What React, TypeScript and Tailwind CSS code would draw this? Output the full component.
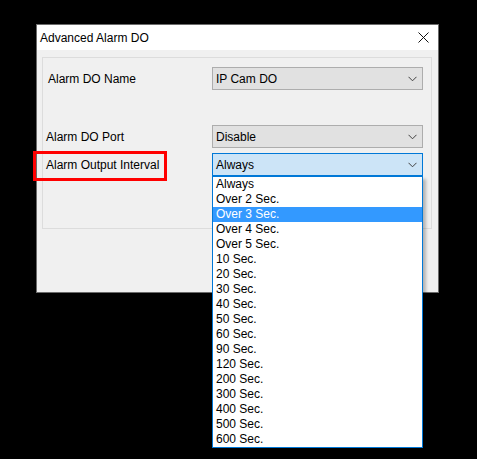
import React from "react";

const intervals = [
  "Always",
  "Over 2 Sec.",
  "Over 3 Sec.",
  "Over 4 Sec.",
  "Over 5 Sec.",
  "10 Sec.",
  "20 Sec.",
  "30 Sec.",
  "40 Sec.",
  "50 Sec.",
  "60 Sec.",
  "90 Sec.",
  "120 Sec.",
  "200 Sec.",
  "300 Sec.",
  "400 Sec.",
  "500 Sec.",
  "600 Sec.",
];

function Chevron() {
  return (
    <svg width="9" height="6" viewBox="0 0 9 6" className="shrink-0">
      <path d="M0.5 0.8 L4.5 4.8 L8.5 0.8" fill="none" stroke="#404040" strokeWidth="1" />
    </svg>
  );
}

function Combo({ value, focused }: { value: string; focused?: boolean }) {
  return (
    <div
      className={`w-[211px] h-[23px] border flex items-center justify-between pl-[3px] pr-[5px] ${
        focused ? "bg-[#cce4f7] border-[#0078d7]" : "bg-[#e1e1e1] border-[#adadad]"
      }`}
    >
      <span>{value}</span>
      <Chevron />
    </div>
  );
}

export default function App() {
  return (
    <div className="w-[477px] h-[459px] bg-black pt-[24px] pl-[36px] relative text-[12px] text-black font-['Liberation_Sans',Arial,sans-serif]">
      {/* Dialog */}
      <div className="w-[403px] h-[269px] border border-[#6b6b6b] bg-[#f0f0f0] flex flex-col">
        <div className="h-[25px] bg-white flex items-center justify-between pl-[3px] pr-[9px] shrink-0">
          <span>Advanced Alarm DO</span>
          <svg width="11" height="11" viewBox="0 0 11 11">
            <path d="M0.5 0.5 L10.5 10.5 M10.5 0.5 L0.5 10.5" stroke="#111" strokeWidth="1" />
          </svg>
        </div>

        {/* Group box */}
        <div className="mt-[7px] ml-[5px] w-[390px] h-[172px] border border-[#dcdcdc] flex flex-col">
          <div className="mt-[9px] flex items-center">
            <span className="w-[169px] pl-[5px]">Alarm DO Name</span>
            <Combo value="IP Cam DO" />
          </div>
          <div className="mt-[35px] flex items-center">
            <span className="w-[169px] pl-[3px]">Alarm DO Port</span>
            <Combo value="Disable" />
          </div>
          <div className="mt-[5px] flex items-center">
            <span className="w-[169px] pl-[3px]">Alarm Output Interval</span>
            <Combo value="Always" focused />
          </div>
        </div>
      </div>

      {/* Red annotation box */}
      <div className="absolute left-[33px] top-[151px] w-[134px] h-[30px] border-[3px] border-[#ff0000]" />

      {/* Open dropdown list */}
      <div className="absolute left-[212px] top-[176px] w-[211px] border border-[#0078d7] bg-white shadow-[3px_3px_3px_rgba(0,0,0,0.25)] flex flex-col">
        {intervals.map((item, i) => (
          <div
            key={i}
            className={`h-[15px] leading-[15px] pl-[3px] ${i === 2 ? "bg-[#3399ff] text-white" : ""}`}
          >
            {item}
          </div>
        ))}
      </div>
    </div>
  );
}
